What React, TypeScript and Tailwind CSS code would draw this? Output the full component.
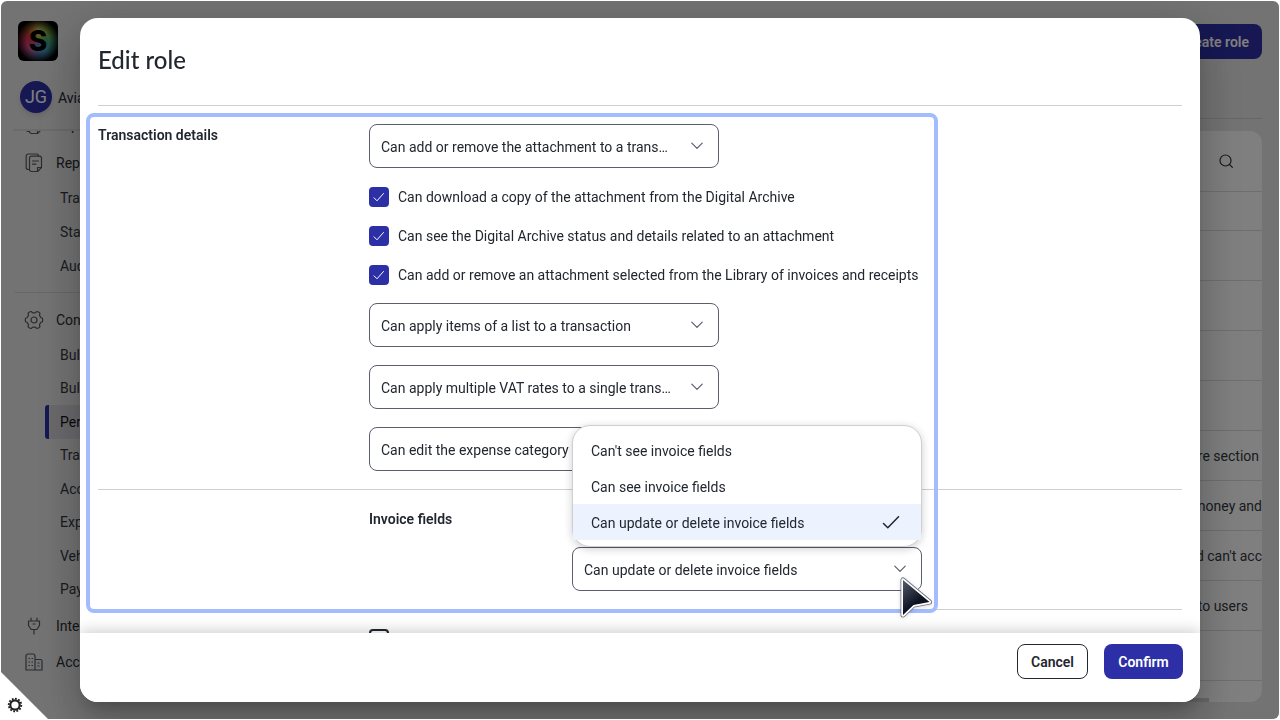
import React, { useState } from "react";

const fontBody = "font-['Roboto','Inter','Liberation_Sans',sans-serif]";

function CopyDocIcon() {
  return (
    <svg viewBox="0 0 18 20" className="h-5 w-[18px]" fill="none" stroke="currentColor" strokeWidth="1.2" strokeLinejoin="round" strokeLinecap="round" aria-hidden="true">
      <path d="M12.500 18.500H6.500a2 2 0 0 1-2-2V5.200a2 2 0 0 1 2-2h8a2 2 0 0 1 2 2v9.300z" />
      <path d="M12.500 18.500v-4h4" />
      <path d="M13.500 3.200A2 2 0 0 0 11.600 1H3.200a2 2 0 0 0-2 2v11.500a2 2 0 0 0 2 2h1.300" />
      <path d="M7.500 8h6M7.500 11.200h3.500" />
    </svg>
  );
}

function GearOutlineIcon() {
  return (
    <svg viewBox="0 0 20 20" className="h-5 w-5" fill="none" stroke="currentColor" strokeWidth="1.2" strokeLinejoin="round" aria-hidden="true">
      <path d="M18.400 8.300q.7 1.700 0 3.400L16.800 12.500 15.500 14.600 15.900 16.800Q14.700 18.300 12.900 18.500L11.200 17.100H8.800L7.100 18.500Q5.300 18.300 4.100 16.800L4.500 14.600 3.200 12.500 1.600 11.700q-.7-1.700 0-3.400L3.200 7.500 4.500 5.400 4.100 3.200Q5.300 1.700 7.100 1.500L8.800 2.900H11.200L12.900 1.500Q14.700 1.700 15.900 3.200L15.500 5.400 16.800 7.500Z" />
      <circle cx="10" cy="10" r="3" />
    </svg>
  );
}

function PlugIcon() {
  return (
    <svg viewBox="0 0 14 18" className="h-[18px] w-3.5" fill="none" stroke="currentColor" strokeWidth="1.2" strokeLinecap="round" strokeLinejoin="round" aria-hidden="true">
      <path d="M4 1v3M10 1v3M1.500 4h11v4.500L9.800 12.500H4.200L1.500 8.500zM7 12.500V17M6 7h2" />
    </svg>
  );
}

function BuildingsIcon() {
  return (
    <svg viewBox="0 0 18 18" className="h-[18px] w-[18px]" fill="none" stroke="currentColor" strokeWidth="1.2" strokeLinejoin="round" aria-hidden="true">
      <path d="M1 17V3a2 2 0 0 1 2-2h5a2 2 0 0 1 2 2v14zM10 6.500h5.500A1.500 1.500 0 0 1 17 8v9h-7" />
      <path d="M3.500 5.500H5M6.500 5.500H8M3.500 9H5M6.500 9H8M3.500 12.500H5M6.500 12.500H8M12.500 10h2M12.500 13h2" />
    </svg>
  );
}

function Chevron() {
  return (
    <svg viewBox="0 0 12 8" className="pointer-events-none absolute top-[18px] right-4 h-2 w-3" fill="none" stroke="#5b5e6b" strokeWidth="1.2" strokeLinecap="round" strokeLinejoin="round" aria-hidden="true">
      <path d="M.8 1.200 6 6.400l5.200-5.200" />
    </svg>
  );
}

function SelectField({ label, options }: { label: string; options: string[] }) {
  return (
    <div className="relative h-11 w-[350px]">
      <select
        aria-label={label}
        defaultValue={options[0]}
        className="h-11 w-full appearance-none truncate rounded-lg border border-[#5b5e6b] bg-white pt-0.5 pr-[46px] pl-[11px] text-sm text-[#22272f] outline-none"
      >
        {options.map((o) => (
          <option key={o}>{o}</option>
        ))}
      </select>
      <Chevron />
    </div>
  );
}

function CheckField({ label, checked }: { label: string; checked: boolean }) {
  const [on, setOn] = useState(checked);
  return (
    <label className="flex h-[21px] items-end gap-[9px]">
      <span className="grid h-5 w-5 shrink-0">
        <input
          type="checkbox"
          checked={on}
          onChange={() => setOn(!on)}
          className="col-start-1 row-start-1 h-5 w-5 appearance-none rounded-[4px] border-2 border-[#22272f] bg-white checked:border-[#2c2fa6] checked:bg-[#2c2fa6]"
        />
        {on && (
          <svg viewBox="0 0 20 20" className="pointer-events-none col-start-1 row-start-1 h-5 w-5" fill="none" stroke="#fff" strokeWidth="1" strokeLinecap="round" strokeLinejoin="round" aria-hidden="true">
            <path d="m5 10.800 3 3L14.500 6.500" />
          </svg>
        )}
      </span>
      <span className="text-sm leading-5 whitespace-nowrap">{label}</span>
    </label>
  );
}

function NavGroup({ icon, label }: { icon: React.ReactNode; label: string }) {
  return (
    <a href="#" className="flex h-9 items-center gap-3 pl-[23px] text-[#2a2d33]">
      <span className="flex w-5 justify-center text-[#55585f]">{icon}</span>
      <span className="text-sm">{label}</span>
    </a>
  );
}

function NavList({ items, active, tall }: { items: string[]; active?: string; tall?: boolean }) {
  return (
    <ul className={tall ? "mb-0.5 flex h-[268px] flex-col" : "flex h-[102px] flex-col"}>
      {items.map((it) => (
        <li key={it} className="flex flex-1">
          <a
            href="#"
            className={
              it === active
                ? "ml-11 flex flex-1 items-center rounded-l-[3px] border-l-4 border-[#2c2fa6] bg-[#d4d4da] pl-[11px] text-sm text-[#111]"
                : "flex flex-1 items-center pl-[59px] text-sm text-[#34373d]"
            }
          >
            {it}
          </a>
        </li>
      ))}
    </ul>
  );
}

function Sidebar() {
  return (
    <aside className="flex w-60 shrink-0 flex-col">
      <div className="pt-5 pl-[17px]">
        <div className="flex h-10 w-10 items-center justify-center rounded-md bg-[radial-gradient(circle,transparent_40%,#000_76%),conic-gradient(#c8b850,#78b048_15%,#38a080_28%,#48a0c0_40%,#5878b0_50%,#b85898_62%,#d83060_75%,#c04828_86%,#c8b850)]">
          <span className="font-['Inter',sans-serif] text-[28px] leading-none font-extrabold text-black">S</span>
        </div>
      </div>
      <div className="mt-5 flex items-center gap-1.5 pl-[19px]">
        <span className="flex h-8 w-8 items-center justify-center rounded-full bg-[#2c2fa6] text-lg text-white shadow-md">JG</span>
        <span className="pt-0.5 text-sm text-[#22272f]">Aviato</span>
      </div>
      <div className="mt-4 ml-3 h-0.5 bg-[#d6d6d6]" />
      <nav className="min-h-0 flex-1 overflow-hidden">
        <div className="-mt-6 h-[38px]">
          <NavGroup icon={<CopyDocIcon />} label="Expenses" />
        </div>
        <NavGroup icon={<CopyDocIcon />} label="Reports" />
        <NavList items={["Transactions", "Statements", "Audit log"]} />
        <div className="my-[9px] ml-3.5 border-t border-[#cfcfcf]" />
        <NavGroup icon={<GearOutlineIcon />} label="Controls" />
        <NavList
          tall
          active="Permissions"
          items={["Bulk import", "Bulk export", "Permissions", "Transactions", "Accounting", "Expenses", "Vehicles", "Payments"]}
        />
        <NavGroup icon={<PlugIcon />} label="Integrations" />
        <NavGroup icon={<BuildingsIcon />} label="Account" />
      </nav>
    </aside>
  );
}

const tableRows = [
  { text: "", cls: "h-[39px]" },
  { text: "", cls: "h-[50px]" },
  { text: "", cls: "h-[50px]" },
  { text: "", cls: "h-[50px]" },
  { text: "", cls: "h-[50px]" },
  { text: "entire section", cls: "h-[50px] pr-[3px]" },
  { text: "money and", cls: "h-[50px]" },
  { text: "and can't acc", cls: "h-[50px]" },
  { text: "to users", cls: "h-[50px] pr-3.5" },
  { text: "", cls: "h-[50px]" },
  { text: "", cls: "h-[50px]" },
];

function RolesPage() {
  return (
    <main className="flex min-w-0 flex-1 flex-col pr-[17px] pb-[17px] pl-4">
      <div className="flex justify-end pt-[23px]">
        <button type="button" className="h-[35px] rounded-lg bg-[#2c2fa6] px-[13px] text-sm font-semibold text-white">
          Create role
        </button>
      </div>
      <div className="mt-[59px] border-t border-[#cfcfcf]" />
      <section className="mt-3 flex min-h-0 flex-1 flex-col overflow-hidden rounded-xl bg-white">
        <div className="flex h-[60px] shrink-0 items-center justify-end pr-[29px]">
          <button type="button" aria-label="Search">
            <svg viewBox="0 0 14 14" className="h-3.5 w-3.5" fill="none" stroke="#333" strokeWidth="1.2" strokeLinecap="round" aria-hidden="true">
              <circle cx="6.500" cy="6.500" r="5.500" />
              <path d="m10.500 10.500 2.900 2.900" />
            </svg>
          </button>
        </div>
        <div className="min-h-0 flex-1 overflow-hidden">
          <table className="w-full border-collapse">
            <tbody>
              {tableRows.map((r, i) => (
                <tr key={i} className="border-t border-[#dedede]">
                  <td className={`${r.cls} text-right text-sm whitespace-nowrap text-[#34373d]`}>{r.text}</td>
                </tr>
              ))}
            </tbody>
          </table>
        </div>
        <div className="mr-[53px] h-1 shrink-0 bg-[#d0d0d4]" />
      </section>
    </main>
  );
}

const invoiceOptions = ["Can't see invoice fields", "Can see invoice fields", "Can update or delete invoice fields"];

function InvoiceSelect() {
  const [value, setValue] = useState(invoiceOptions[2]);
  return (
    <div className="relative h-11 w-[350px]">
      <select
        aria-label="Invoice fields"
        value={value}
        onChange={(e) => setValue(e.target.value)}
        className="h-11 w-full appearance-none truncate rounded-lg border border-[#5b5e6b] bg-white pt-0.5 pr-[46px] pl-[11px] text-sm text-[#22272f] outline-none"
      >
        {invoiceOptions.map((o) => (
          <option key={o}>{o}</option>
        ))}
      </select>
      <Chevron />
      <ul role="listbox" aria-label="Invoice fields" className="absolute bottom-full left-0 z-10 w-full rounded-[18px] border border-[#cfcfd2] bg-white py-1.5 shadow-[0_2px_8px_rgba(0,0,0,0.2)]">
        {invoiceOptions.map((o) => (
          <li
            key={o}
            role="option"
            aria-selected={o === value}
            onClick={() => setValue(o)}
            className={
              o === value
                ? "flex h-9 items-center justify-between bg-[#ecf2fe] pt-0.5 pr-[21px] pl-[18px] text-sm"
                : "flex h-9 items-center justify-between pt-0.5 pr-[21px] pl-[18px] text-sm"
            }
          >
            {o}
            {o === value && (
              <svg viewBox="0 0 18 14" className="h-3.5 w-[18px]" fill="none" stroke="#22272f" strokeWidth="1.5" strokeLinecap="round" strokeLinejoin="round" aria-hidden="true">
                <path d="m1.500 7.500 4.300 4.300L16.500.7" />
              </svg>
            )}
          </li>
        ))}
      </ul>
      <svg viewBox="0 0 36 44" className="pointer-events-none absolute top-7 left-[326px] z-30 h-11 w-9 drop-shadow-sm" aria-hidden="true">
        <defs>
          <linearGradient id="pointer-fill" x1="0" y1="0" x2="0.6" y2="1">
            <stop offset="0" stopColor="#555b6b" />
            <stop offset="0.7" stopColor="#0c1222" />
          </linearGradient>
        </defs>
        <path d="M5 5v35L15.500 30l16-3z" fill="none" stroke="#6b7080" strokeWidth="5" strokeLinejoin="round" />
        <path d="M5 5v35L15.500 30l16-3z" fill="none" stroke="#fff" strokeWidth="3.4" strokeLinejoin="round" />
        <path d="M5 5v35L15.500 30l16-3z" fill="url(#pointer-fill)" />
      </svg>
    </div>
  );
}

function EditRoleDialog() {
  return (
    <div role="dialog" aria-modal="true" aria-labelledby="dialog-title" className="flex w-full flex-col overflow-hidden rounded-[18px] bg-white text-[#22272f] shadow-[0_11px_15px_-7px_rgba(0,0,0,0.2),0_24px_38px_3px_rgba(0,0,0,0.14),0_9px_46px_8px_rgba(0,0,0,0.12)]">
      <header className="px-[18px]">
        <h1 id="dialog-title" className="flex h-[87px] items-center pb-1 font-['Lato',sans-serif] text-2xl font-medium">
          Edit role
        </h1>
        <div className="border-t border-[#cfcfcf]" />
      </header>
      <div className="relative min-h-0 flex-1 overflow-hidden px-[18px]">
        <section className="grid grid-cols-[271px_1fr] border-b border-[#cfcfcf] py-[18px]">
          <h2 className="text-sm leading-[23px] font-semibold">Transaction details</h2>
          <div className="flex flex-col gap-[18px]">
            <SelectField label="Attachments" options={["Can add or remove the attachment to a transaction", "Can't see attachments"]} />
            <CheckField checked label="Can download a copy of the attachment from the Digital Archive" />
            <CheckField checked label="Can see the Digital Archive status and details related to an attachment" />
            <CheckField checked label="Can add or remove an attachment selected from the Library of invoices and receipts" />
            <SelectField label="List items" options={["Can apply items of a list to a transaction", "Can't see lists"]} />
            <SelectField label="VAT rates" options={["Can apply multiple VAT rates to a single transaction", "Can't see VAT rates"]} />
            <SelectField label="Expense category" options={["Can edit the expense category", "Can't see the expense category"]} />
          </div>
        </section>
        <section className="grid grid-cols-[271px_1fr] border-b border-[#cfcfcf] py-[18px]">
          <div className="col-start-2 flex flex-col gap-4">
            <h2 className="text-sm leading-[23px] font-semibold">Invoice fields</h2>
            <div className="pl-[203px]">
              <InvoiceSelect />
            </div>
          </div>
        </section>
        <section className="grid grid-cols-[271px_1fr] py-[18px]">
          <div className="col-start-2 flex">
            <label className="flex h-[21px] items-end">
              <input type="checkbox" aria-label="Audit trail" className="h-5 w-5 appearance-none rounded-[4px] border-2 border-[#22272f] bg-white" />
            </label>
          </div>
        </section>
        <div className="pointer-events-none absolute top-[7px] left-1.5 z-20 h-[500px] w-[852px] rounded-lg border-4 border-[#a3bbff]" />
      </div>
      <footer className="relative z-20 flex h-[69px] shrink-0 items-start justify-end gap-4 bg-white pt-[11px] pr-[17px] shadow-[0_-2px_14px_rgba(0,0,0,0.2)]">
        <button type="button" className="h-[35px] min-w-[71px] rounded-lg border border-[#22272f] bg-white px-2 text-sm font-semibold">
          Cancel
        </button>
        <button type="button" className="h-[35px] min-w-[79px] rounded-lg bg-[#2c2fa6] px-2 text-sm font-semibold text-white">
          Confirm
        </button>
      </footer>
    </div>
  );
}

export default function App() {
  return (
    <div className={`h-screen overflow-hidden bg-white p-px ${fontBody}`}>
      <div className="flex h-full overflow-hidden rounded-md bg-[#e6e6e6]">
        <Sidebar />
        <RolesPage />
      </div>
      <div className="fixed inset-px flex overflow-hidden rounded-md bg-black/50 px-[79px] py-[17px]">
        <EditRoleDialog />
      </div>
      <button type="button" aria-label="Settings" className="fixed bottom-px left-0 flex h-12 w-12 items-end bg-white pb-1.5 pl-[7px] [clip-path:polygon(0_0,0_100%,100%_100%)]">
        <svg viewBox="0 0 16 16" className="h-4 w-4" fill="none" stroke="#222" aria-hidden="true">
          <circle cx="8" cy="8" r="4.700" strokeWidth="2.200" />
          <circle cx="8" cy="8" r="6.300" strokeWidth="1.800" pathLength="24" strokeDasharray="1.100 0.900" />
        </svg>
      </button>
    </div>
  );
}
